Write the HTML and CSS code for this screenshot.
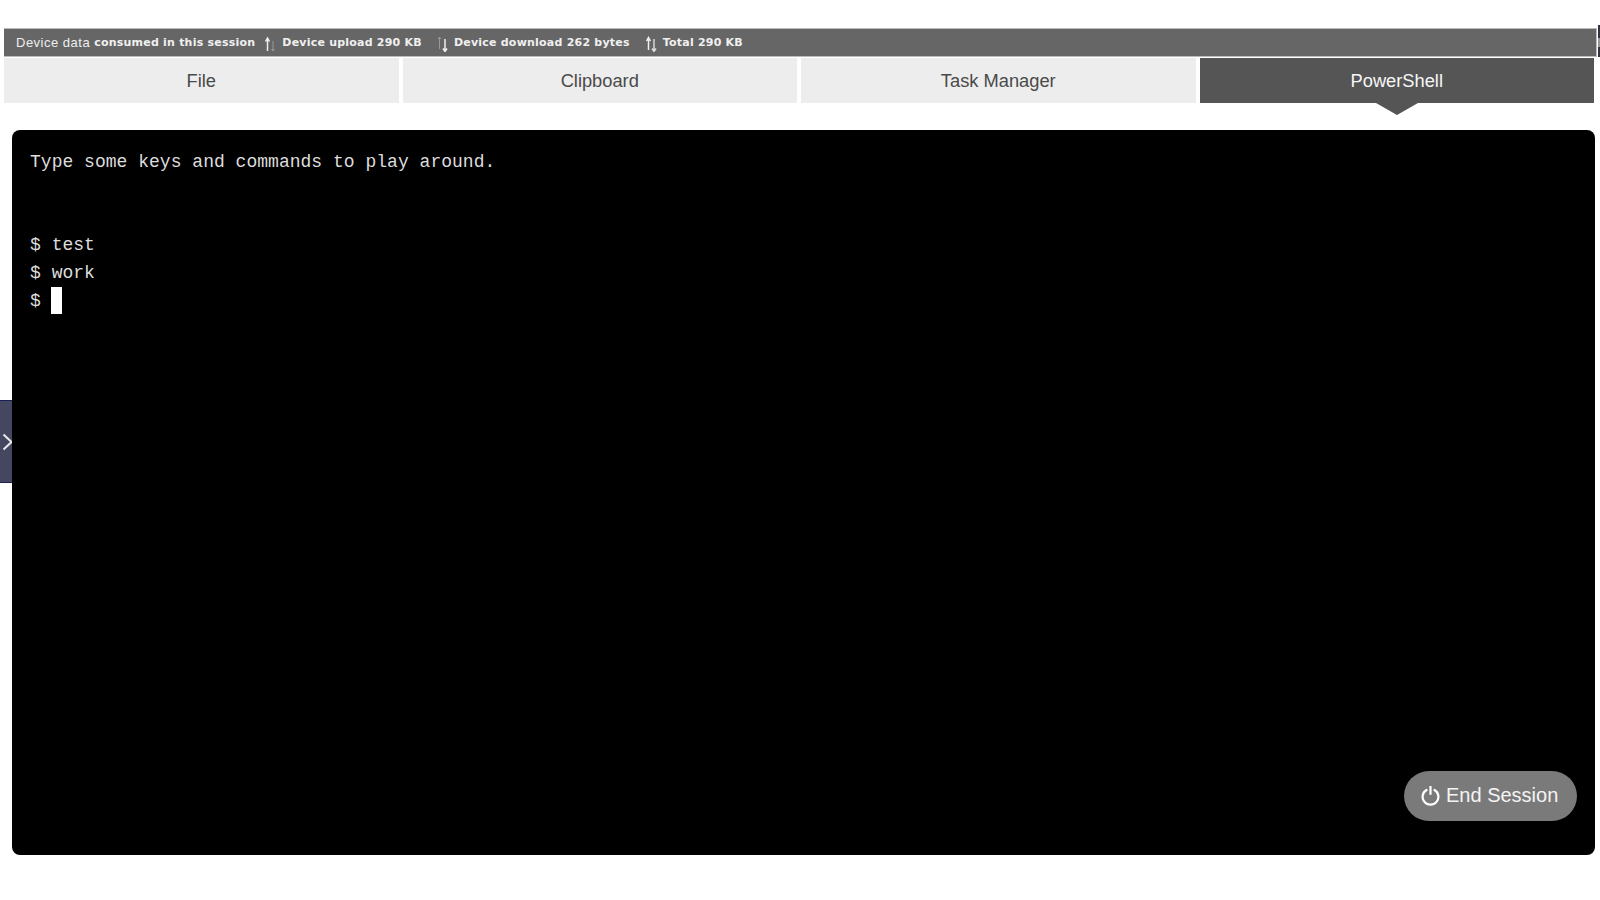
FILE: index.html
```html
<!DOCTYPE html>
<html lang="en">
<head>
<meta charset="utf-8">
<title>PowerShell</title>
<link rel="stylesheet" href="styles.css">
</head>
<body>
<div class="page">
  <div class="data-bar">
    <span class="label">Device data</span>
    <b class="strong">consumed in this session</b>
    <svg class="arrows upload" width="12" height="16" viewBox="0 0 12 16"><path d="M3.500 15V2.500M1.500 5.500l2-3.500 2 3.500" fill="none" stroke="#eee" stroke-width="1.500"/><path d="M9 5v10M7.500 13l1.500 2 1.500-2" stroke="#999" stroke-width="1" fill="none"/></svg>
    <b class="strong">Device upload 290 KB</b>
    <svg class="arrows download" width="12" height="16" viewBox="0 0 12 16"><path d="M3.500 13V1M2 3l1.500-2 1.500 2" stroke="#999" stroke-width="1" fill="none"/><path d="M9 3v12M7 12.500l2 3 2-3" fill="none" stroke="#eee" stroke-width="1.500"/></svg>
    <b class="strong">Device download 262 bytes</b>
    <svg class="arrows total" width="12" height="16" viewBox="0 0 12 16"><path d="M3.500 14V2M1.500 5l2-3.500 2 3.500" fill="none" stroke="#eee" stroke-width="1.500"/><path d="M9 3v12M7 12.500l2 3 2-3" fill="none" stroke="#ddd" stroke-width="1.400"/></svg>
    <b class="strong">Total 290 KB</b>
  </div>
  <div class="edge-mark"></div>
  <nav class="tabs">
    <div class="tab">File</div>
    <div class="tab">Clipboard</div>
    <div class="tab">Task Manager</div>
    <div class="tab active">PowerShell</div>
  </nav>
  <main class="terminal">
    <div class="line">Type some keys and commands to play around.</div>
    <div class="line blank"></div>
    <div class="line">$ test</div>
    <div class="line">$ work</div>
    <div class="line">$ <span class="cursor"></span></div>
    <button class="end-session">
      <svg class="power" width="19" height="20" viewBox="0 0 19 20"><path d="M5.500 4a7.900 7.900 0 1 0 8 0" fill="none" stroke="#fff" stroke-width="2.200" stroke-linecap="round"/><path d="M9.500 .5v7.500" fill="none" stroke="#fff" stroke-width="2.200" stroke-linecap="round"/></svg>
      End Session
    </button>
  </main>
  <div class="side-handle">
    <svg width="12" height="22" viewBox="0 0 12 22"><path d="M3.500 3.500l8 7.500-8 7.500" fill="none" stroke="#e8e8ee" stroke-width="2"/></svg>
  </div>
</div>
</body>
</html>
```

FILE: styles.css
```css
* { box-sizing: border-box; }
html, body { margin: 0; padding: 0; background: #fff; }
.page {
  position: relative;
  width: 1600px;
  height: 900px;
  padding: 28px 0 0 4px;
  overflow: hidden;
  font-family: "Liberation Sans", Arial, sans-serif;
}
.data-bar {
  display: flex;
  align-items: center;
  width: 1593px;
  height: 29px;
  padding-left: 12px;
  background: #666;
  border: 1px solid #bbb;
  border-left: 0;
  color: #fff;
  font-size: 12px;
}
.label { font-size: 13px; letter-spacing: 0.500px; color: #eee; margin-right: 4px; }
.strong { font-family: "DejaVu Sans", sans-serif; font-size: 11px; font-weight: 700; letter-spacing: 0.220px; color: #f0f0f0; }
.arrows { flex: none; margin-top: 3px; }
.arrows.upload { margin-left: 9px; margin-right: 6px; }
.arrows.download { margin-left: 14px; margin-right: 6px; }
.arrows.total { margin-left: 15px; margin-right: 6px; }
.edge-mark {
  position: absolute;
  right: 0;
  top: 25px;
  width: 2px;
  height: 32px;
  background: linear-gradient(#334 0 40%, #999 40% 70%, #334 70%);
}
.tabs {
  display: flex;
  gap: 4px;
  width: 1590px;
  margin-top: 1px;
}
.tab {
  position: relative;
  flex: 1;
  height: 45px;
  display: flex;
  align-items: center;
  justify-content: center;
  background: #ededed;
  color: #4a4a4a;
  font-size: 18.300px;
}
.tab.active { background: #555; color: #f6f6f6; }
.tab.active::after {
  content: "";
  position: absolute;
  left: 50%;
  top: 100%;
  margin-left: -21px;
  border-left: 21px solid transparent;
  border-right: 21px solid transparent;
  border-top: 12px solid #555;
}
.terminal {
  position: relative;
  width: 1582.500px;
  height: 725px;
  margin: 27px 0 0 8px;
  padding: 18px 18px;
  background: #000;
  border-radius: 8px;
  color: #ddd;
  font-family: "Liberation Mono", "Courier New", monospace;
  font-size: 18px;
  letter-spacing: 0.020px;
  line-height: 28px;
}
.line { height: 28px; white-space: pre; }
.line.blank { height: 55px; }
.cursor {
  display: inline-block;
  width: 11px;
  height: 27px;
  margin-left: -1px;
  background: #fff;
  vertical-align: -8px;
}
.end-session {
  position: absolute;
  right: 17.500px;
  bottom: 34px;
  display: flex;
  align-items: center;
  gap: 6px;
  width: 173px;
  height: 50px;
  padding: 0 0 1px 17px;
  border: 0;
  border-radius: 25px;
  background: #7a7a7a;
  color: #f4f4f4;
  font-family: "Liberation Sans", Arial, sans-serif;
  font-size: 20px;
}
.side-handle {
  position: absolute;
  left: 0;
  top: 400px;
  width: 12px;
  height: 83px;
  display: flex;
  align-items: center;
  background: #44475f;
  border-top: 1px solid #1a1f55;
  border-bottom: 1px solid #1a1f55;
}
```
